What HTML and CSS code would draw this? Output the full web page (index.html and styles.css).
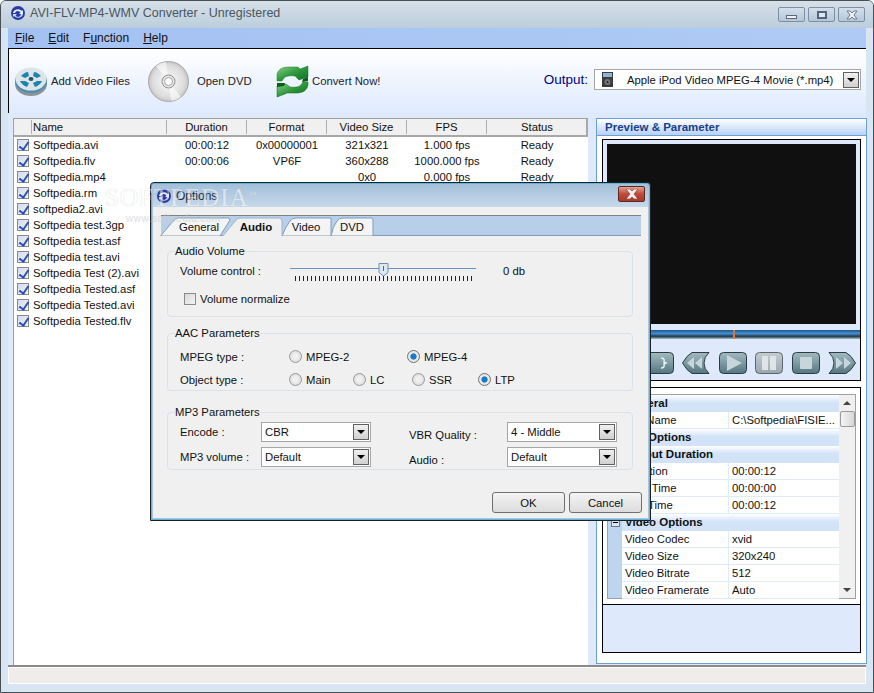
FILE: index.html
```html
<!DOCTYPE html>
<html lang="en">
<head>
  <meta charset="UTF-8">
  <title>AVI-FLV-MP4-WMV Converter - Unregistered</title>
  <link rel="stylesheet" href="styles.css">
</head>
<body>
  <div class="window">
    <svg width="0" height="0" class="defs">
      <defs>
        <linearGradient id="btn" x1="0" y1="0" x2="0" y2="1">
          <stop offset="0" stop-color="#a3b9bf"/>
          <stop offset="0.5" stop-color="#7d9aa2"/>
          <stop offset="1" stop-color="#557680"/>
        </linearGradient>
        <linearGradient id="btn-off" x1="0" y1="0" x2="0" y2="1">
          <stop offset="0" stop-color="#c4ccd2"/>
          <stop offset="1" stop-color="#9aa6ae"/>
        </linearGradient>
        <linearGradient id="green" x1="0" y1="0" x2="1" y2="1">
          <stop offset="0" stop-color="#8fd08c"/>
          <stop offset="0.5" stop-color="#2f9a3c"/>
          <stop offset="1" stop-color="#0c6a22"/>
        </linearGradient>
        <radialGradient id="cd" cx="0.5" cy="0.5" r="0.5">
          <stop offset="0.2" stop-color="#f4f4f4"/>
          <stop offset="0.8" stop-color="#dcdcdc"/>
          <stop offset="1" stop-color="#c4c4c4"/>
        </radialGradient>
      </defs>
    </svg>

    <div class="titlebar">
      <svg class="app-icon" width="16" height="16" viewBox="0 0 16 16">
        <circle cx="8" cy="8" r="7" fill="#2a3aa8"/>
        <path d="M3 8a5 4 0 0 1 9-2l1-1v4H9l1.500-1.500A3 3 0 0 0 5 8z" fill="#e8eef8"/>
        <path d="M13 9a5 4 0 0 1-9 2l-1 1V9h4l-1.500 1.500A3 3 0 0 0 11 9z" fill="#cfd8f0"/>
      </svg>
      <span class="title-text">AVI-FLV-MP4-WMV Converter - Unregistered</span>
      <div class="title-buttons">
        <span class="cap-btn"><i class="cap-min"></i></span>
        <span class="cap-btn"><i class="cap-max"></i></span>
        <span class="cap-btn cap-x">
          <svg width="12" height="10" viewBox="0 0 12 10"><path d="M1 1h3l2 2 2-2h3L8 5l3 4H8L6 7 4 9H1l3-4z" fill="#eef2f6" stroke="#6c7c8c" stroke-width="1"/></svg>
        </span>
      </div>
    </div>

    <div class="client">
      <div class="menubar">
        <span class="menu"><u>F</u>ile</span>
        <span class="menu"><u>E</u>dit</span>
        <span class="menu">F<u>u</u>nction</span>
        <span class="menu"><u>H</u>elp</span>
      </div>

      <div class="toolbar">
        <div class="tool tool-add">
          <svg width="34" height="32" viewBox="0 0 34 32">
            <ellipse cx="17" cy="19" rx="16" ry="12" fill="#8d9298"/>
            <ellipse cx="17" cy="16" rx="16" ry="12" fill="#4d8fb0"/>
            <ellipse cx="17" cy="14" rx="15.500" ry="11.500" fill="#dfe4e8"/>
            <path d="M7 11q4-4 7-4l1 4-4 2zM27 11q-4-4-7-4l-1 4 4 2zM6 16q2 4 7 6l2-4-4-2zM28 16q-2 4-7 6l-2-4 4-2z" fill="#1a86ad"/>
            <ellipse cx="17" cy="14" rx="2.500" ry="2" fill="#27536a"/>
          </svg>
          <span>Add Video Files</span>
        </div>
        <div class="tool tool-dvd">
          <svg width="41" height="41" viewBox="0 0 41 41">
            <circle cx="20.500" cy="20.500" r="20" fill="url(#cd)" stroke="#a8a8a8"/>
            <path d="M20.500 20.500L8 5a20 20 0 0 1 10-4zM20.500 20.500L33 36a20 20 0 0 1-10 4z" fill="#fff" opacity="0.6"/>
            <circle cx="20.500" cy="20.500" r="6.500" fill="#e8e8e8" stroke="#8f8f8f"/>
            <circle cx="20.500" cy="20.500" r="4" fill="#fff" stroke="#a0a0a0"/>
          </svg>
          <span>Open DVD</span>
        </div>
        <div class="tool tool-convert">
          <svg width="33" height="33" viewBox="0 0 33 33">
            <path d="M1 9Q3 2 12 2h10l2 2 8-3v11l-9 3-4-4q-8-1-11 2l-2 3H1z" fill="url(#green)" stroke="#1a7a2c" stroke-width="0.500"/>
            <path d="M32 20q-1 7-10 8H11l-2 1-8 3V21l9-2 4 3q8 1 11-2l2-3h5z" fill="url(#green)" stroke="#0c6a22" stroke-width="0.500"/>
            <path d="M1 18h8l-1 3-7 1zM32 12v4l-6 1 1-3z" fill="#0b5a1d"/>
          </svg>
          <span>Convert Now!</span>
        </div>
        <div class="output">
          <span class="output-label">Output:</span>
          <div class="combo combo-output">
            <svg class="ipod" width="11" height="15" viewBox="0 0 11 15">
              <rect width="11" height="15" fill="#3a3c40"/>
              <rect x="1" y="1" width="9" height="4" fill="#8fb4d8"/>
              <circle cx="5.500" cy="10" r="3" fill="#777"/>
              <circle cx="5.500" cy="10" r="1" fill="#222"/>
            </svg>
            <span class="combo-text">Apple iPod Video MPEG-4 Movie (*.mp4)</span>
            <span class="combo-arrow"></span>
          </div>
        </div>
      </div>

      <div class="workspace">
        <div class="list">
          <div class="list-row list-head">
            <span></span>
            <span class="cell-name">Name</span>
            <span>Duration</span>
            <span>Format</span>
            <span>Video Size</span>
            <span>FPS</span>
            <span>Status</span>
          </div>
          <div class="list-row"><i class="check"></i><span class="cell-name">Softpedia.avi</span><span>00:00:12</span><span>0x00000001</span><span>321x321</span><span>1.000 fps</span><span>Ready</span></div>
          <div class="list-row"><i class="check"></i><span class="cell-name">Softpedia.flv</span><span>00:00:06</span><span>VP6F</span><span>360x288</span><span>1000.000 fps</span><span>Ready</span></div>
          <div class="list-row"><i class="check"></i><span class="cell-name">Softpedia.mp4</span><span></span><span></span><span>0x0</span><span>0.000 fps</span><span>Ready</span></div>
          <div class="list-row"><i class="check"></i><span class="cell-name">Softpedia.rm</span><span></span><span></span><span></span><span></span><span></span></div>
          <div class="list-row"><i class="check"></i><span class="cell-name">softpedia2.avi</span><span></span><span></span><span></span><span></span><span></span></div>
          <div class="list-row"><i class="check"></i><span class="cell-name">Softpedia test.3gp</span><span></span><span></span><span></span><span></span><span></span></div>
          <div class="list-row"><i class="check"></i><span class="cell-name">Softpedia test.asf</span><span></span><span></span><span></span><span></span><span></span></div>
          <div class="list-row"><i class="check"></i><span class="cell-name">Softpedia test.avi</span><span></span><span></span><span></span><span></span><span></span></div>
          <div class="list-row"><i class="check"></i><span class="cell-name">Softpedia Test (2).avi</span><span></span><span></span><span></span><span></span><span></span></div>
          <div class="list-row"><i class="check"></i><span class="cell-name">Softpedia Tested.asf</span><span></span><span></span><span></span><span></span><span></span></div>
          <div class="list-row"><i class="check"></i><span class="cell-name">Softpedia Tested.avi</span><span></span><span></span><span></span><span></span><span></span></div>
          <div class="list-row"><i class="check"></i><span class="cell-name">Softpedia Tested.flv</span><span></span><span></span><span></span><span></span><span></span></div>
        </div>

        <div class="panel">
          <div class="panel-head">Preview &amp; Parameter</div>
          <div class="panel-body">
            <div class="preview">
              <div class="screen"></div>
              <div class="seekbar"><i class="seek-mark"></i></div>
              <div class="controls">
                <svg width="28" height="22" viewBox="0 0 28 22"><rect x="0.500" y="0.500" width="27" height="21" rx="4" fill="url(#btn)" stroke="#2c3c42"/><path d="M15 6q4 0 3 4l2 1-2 1q1 4-3 4" fill="none" stroke="#e8f2f4" stroke-width="1.500"/></svg>
                <svg width="28" height="22" viewBox="0 0 28 22"><path d="M10 .5H27Q22 5 22 11t5 10.500H10Q5 19 .5 11 5 3 10 .5z" fill="url(#btn)" stroke="#2c3c42"/><path d="M12 5v12l-7-6zM20 5v12l-7-6z" fill="#c6d6da"/></svg>
                <svg width="28" height="22" viewBox="0 0 28 22"><rect x="0.500" y="0.500" width="27" height="21" rx="4" fill="url(#btn)" stroke="#2c3c42"/><path d="M8 3v16l15-8z" fill="#c6d6da"/></svg>
                <svg width="28" height="22" viewBox="0 0 28 22"><rect x="0.500" y="0.500" width="27" height="21" rx="4" fill="url(#btn-off)" stroke="#5c666c"/><rect x="7" y="4" width="6" height="14" fill="#dfe4e8"/><rect x="15" y="4" width="6" height="14" fill="#dfe4e8"/></svg>
                <svg width="28" height="22" viewBox="0 0 28 22"><rect x="0.500" y="0.500" width="27" height="21" rx="4" fill="url(#btn)" stroke="#2c3c42"/><rect x="8" y="5" width="12" height="12" rx="1" fill="#c6d6da"/></svg>
                <svg width="28" height="22" viewBox="0 0 28 22"><path d="M18 .5H1Q6 5 6 11t-5 10.500H18Q23 19 27.500 11 23 3 18 .5z" fill="url(#btn)" stroke="#2c3c42"/><path d="M8 5v12l7-6zM16 5v12l7-6z" fill="#c6d6da"/></svg>
              </div>
            </div>

            <div class="props-box">
              <div class="props-wrap">
                <div class="props">
                  <div class="prop-section">General</div>
                  <div class="prop"><span>File Name</span><span>C:\Softpedia\FISIE...</span></div>
                  <div class="prop-section">File Options</div>
                  <div class="prop-section">Output Duration</div>
                  <div class="prop"><span>Duration</span><span>00:00:12</span></div>
                  <div class="prop"><span>Start Time</span><span>00:00:00</span></div>
                  <div class="prop"><span>End Time</span><span>00:00:12</span></div>
                  <div class="prop-section"><i class="minus"></i>Video Options</div>
                  <div class="prop"><span>Video Codec</span><span>xvid</span></div>
                  <div class="prop"><span>Video Size</span><span>320x240</span></div>
                  <div class="prop"><span>Video Bitrate</span><span>512</span></div>
                  <div class="prop"><span>Video Framerate</span><span>Auto</span></div>
                </div>
                <div class="scrollbar">
                  <i class="arrow-up"></i>
                  <i class="thumb"></i>
                  <i class="arrow-down"></i>
                </div>
              </div>
              <div class="props-help"></div>
            </div>
          </div>
        </div>
      </div>

      <div class="statusbar"></div>
    </div>

    <div class="dialog">
      <div class="dialog-title">
        <svg class="app-icon" width="16" height="16" viewBox="0 0 16 16">
          <circle cx="8" cy="8" r="7" fill="#2a3aa8"/>
          <path d="M3 8a5 4 0 0 1 9-2l1-1v4H9l1.500-1.500A3 3 0 0 0 5 8z" fill="#e8eef8"/>
          <path d="M13 9a5 4 0 0 1-9 2l-1 1V9h4l-1.500 1.500A3 3 0 0 0 11 9z" fill="#cfd8f0"/>
        </svg>
        <span>Options</span>
        <span class="dialog-close">
          <svg width="14" height="10" viewBox="0 0 14 10"><path d="M1 0h4l2 2 2-2h4L9 5l4 5H9L7 8l-2 2H1l4-5z" fill="#f4f0ee" stroke="#7a2a20" stroke-width="0.600"/></svg>
        </span>
      </div>
      <div class="dialog-body">
        <div class="tabstrip">
          <svg class="tabs" width="240" height="20" viewBox="0 0 240 20">
            <path d="M.5 20L14 4q2-2 4-2H68q2 0 2 2L60 20z" fill="#f4f4f4" stroke="#7f9db9"/>
            <path d="M122 20q4-10 8-15 2-3 6-3h35v18z" fill="#f4f4f4" stroke="#7f9db9"/>
            <path d="M171 20q2-10 6-15 2-3 6-3h28q2 0 2 2v16z" fill="#f4f4f4" stroke="#7f9db9"/>
            <path d="M62 21L76 4q2-2 4-2h39q3 0 3 3v16z" fill="#f0f0f0" stroke="#9ab4cc"/>
            <path d="M62 21H122" stroke="#f0f0f0" stroke-width="2"/>
            <text x="39" y="15" text-anchor="middle" class="tab-text">General</text>
            <text x="96" y="15" text-anchor="middle" class="tab-text tab-active">Audio</text>
            <text x="146" y="15" text-anchor="middle" class="tab-text">Video</text>
            <text x="192" y="15" text-anchor="middle" class="tab-text">DVD</text>
          </svg>
        </div>

        <fieldset class="group group-volume">
          <legend>Audio Volume</legend>
          <div class="volume-row">
            <span class="volume-label">Volume control :</span>
            <div class="slider">
              <i class="slider-line"></i>
              <svg class="slider-thumb" width="11" height="15" viewBox="0 0 11 15"><path d="M1 1.500h9v9L5.500 14 1 10.500z" fill="#dce8f4" stroke="#6f8fb0"/><path d="M5.500 4v5" stroke="#3a6ea8"/></svg>
              <i class="slider-ticks"></i>
            </div>
            <span class="volume-value">0 db</span>
          </div>
          <label class="normalize"><i class="check-off"></i>Volume normalize</label>
        </fieldset>

        <fieldset class="group group-aac">
          <legend>AAC Parameters</legend>
          <div class="aac-row">
            <span class="aac-label">MPEG type :</span>
            <span class="radio-item item-mpeg2"><i class="radio"></i>MPEG-2</span>
            <span class="radio-item"><i class="radio on"></i>MPEG-4</span>
          </div>
          <div class="aac-row">
            <span class="aac-label">Object type :</span>
            <span class="radio-item item-main"><i class="radio"></i>Main</span>
            <span class="radio-item item-lc"><i class="radio"></i>LC</span>
            <span class="radio-item item-ssr"><i class="radio"></i>SSR</span>
            <span class="radio-item"><i class="radio on"></i>LTP</span>
          </div>
        </fieldset>

        <fieldset class="group group-mp3">
          <legend>MP3 Parameters</legend>
          <div class="mp3-grid">
            <span class="mp3-label">Encode :</span>
            <div class="combo combo-small"><span class="combo-text">CBR</span><span class="combo-arrow"></span></div>
            <span class="mp3-label mp3-label-low">VBR Quality :</span>
            <div class="combo combo-small"><span class="combo-text">4 - Middle</span><span class="combo-arrow"></span></div>
            <span class="mp3-label">MP3 volume :</span>
            <div class="combo combo-small"><span class="combo-text">Default</span><span class="combo-arrow"></span></div>
            <span class="mp3-label mp3-label-low">Audio :</span>
            <div class="combo combo-small"><span class="combo-text">Default</span><span class="combo-arrow"></span></div>
          </div>
        </fieldset>

        <div class="dialog-actions">
          <button class="btn">OK</button>
          <button class="btn">Cancel</button>
        </div>
      </div>
    </div>

    <div class="watermark">SOFTPEDIA<sup>™</sup></div>
    <div class="watermark-url">www.softpedia.com</div>
  </div>
</body>
</html>
```

FILE: styles.css
```css
* {
  box-sizing: border-box;
}

body {
  margin: 0;
  font-family: "Liberation Sans", Arial, sans-serif;
  font-size: 11.3px;
  color: #111;
  background: #fff;
}

.defs {
  position: absolute;
}

.window {
  position: relative;
  width: 874px;
  height: 693px;
  overflow: hidden;
  display: flex;
  flex-direction: column;
  background: #d8e6f4;
  border: 1px solid #4a4f55;
  border-radius: 6px 6px 0 0;
}

/* title bar */
.titlebar {
  height: 27px;
  flex: none;
  display: flex;
  align-items: center;
  padding: 0 8px 3px 9px;
  background: linear-gradient(to bottom, #d6e0e8, #bccddc);
}

.title-text {
  margin-left: 4px;
  font-size: 12.5px;
  color: #4b5660;
}

.title-buttons {
  margin-left: auto;
  display: flex;
  gap: 3px;
  margin-top: 3px;
}

.cap-btn {
  width: 27px;
  height: 15px;
  display: flex;
  align-items: center;
  justify-content: center;
  background: linear-gradient(to bottom, #d4e0ea, #b4c6d8);
  border: 1px solid #7f8fa2;
  border-radius: 2px;
}

.cap-min {
  width: 11px;
  height: 4px;
  margin-top: 4px;
  background: #eef2f6;
  border: 1px solid #5c6a7a;
}

.cap-max {
  width: 10px;
  height: 8px;
  background: #dfe8f0;
  border: 2px solid #56647a;
  border-top-width: 2px;
}

/* main client area */
.client {
  flex: 1;
  margin: 0 7px 8px 7px;
  display: flex;
  flex-direction: column;
  min-height: 0;
}

.menubar {
  height: 20px;
  flex: none;
  display: flex;
  align-items: center;
  background: linear-gradient(to right, #a3c1f2, #afcbf5);
  font-size: 12px;
  padding-left: 7px;
}

.menu {
  margin-right: 14px;
}

.toolbar {
  height: 65px;
  flex: none;
  display: flex;
  align-items: center;
  background: linear-gradient(to bottom, #fff, #deeafd);
  border-top: 1px solid #000;
  border-left: 1px solid #000;
  padding-left: 5px;
}

.tool {
  display: flex;
  align-items: center;
  color: #1a2230;
}

.tool-add {
  gap: 3px;
  width: 134px;
}

.tool-dvd {
  gap: 8px;
  width: 128px;
}

.tool-convert {
  gap: 3px;
}

.output {
  margin-left: auto;
  display: flex;
  align-items: center;
  margin-right: 5px;
  margin-top: -3px;
}

.output-label {
  color: #000080;
  font-size: 13.5px;
  margin-right: 6px;
}

.combo {
  display: flex;
  align-items: center;
  background: #fff;
  border: 1px solid #a6a6a6;
  position: relative;
}

.combo-output {
  width: 267px;
  height: 21px;
  padding-left: 7px;
}

.ipod {
  margin-right: 14px;
}

.combo-arrow {
  width: 16px;
  height: 16px;
  margin-left: auto;
  margin-right: 1px;
  background: linear-gradient(to bottom, #f0f0f0, #d0d0d0);
  border: 1px solid #606060;
  position: relative;
}

.combo-arrow::after {
  content: "";
  position: absolute;
  left: 3px;
  top: 5px;
  border: 4px solid transparent;
  border-top: 4px solid #000;
}

/* list and panel */
.workspace {
  flex: 1;
  display: flex;
  min-height: 0;
  background: #deeafc;
  padding: 5px 0 0 5px;
}

.list {
  width: 575px;
  background: #fff;
  border-left: 1px solid #a0a0a0;
  border-top: 1px solid #a0a0a0;
  flex: none;
}

.list-row {
  display: grid;
  grid-template-columns: 18px 135px 80px 80px 80px 80px 100px;
  height: 16px;
  align-items: center;
  text-align: center;
  white-space: nowrap;
}

.list-row .cell-name {
  text-align: left;
  padding-left: 1px;
}

.list-head {
  height: 18px;
  background: #f0f0f0;
  border-bottom: 2px solid #a8a8a8;
  border-right: 2px solid #a8a8a8;
  margin-bottom: 0;
}

.list-head span {
  line-height: 16px;
  height: 14px;
  border-right: 1px solid #b0b0b0;
  line-height: 14px;
}

.list-head span:last-child {
  border-right: none;
}

.check {
  width: 12px;
  height: 12px;
  margin-left: 3px;
  border: 1px solid #8a8a8a;
  background: linear-gradient(135deg, #d4dce8, #f0f3f8);
  position: relative;
}

.check::after {
  content: "";
  position: absolute;
  left: 3px;
  top: 0;
  width: 4px;
  height: 8px;
  border: solid #2a4fc0;
  border-width: 0 2px 2px 0;
  transform: rotate(35deg);
}

.panel {
  width: 271px;
  margin-left: 8px;
  margin-bottom: 1px;
  border: 1px solid #6c9fd8;
  background: #fff;
  flex: none;
  display: flex;
  flex-direction: column;
}

.panel-head {
  height: 17px;
  flex: none;
  background: linear-gradient(to bottom, #fff, #b6d2f6);
  border-bottom: 1px solid #6c9fd8;
  color: #18408c;
  font-weight: bold;
  font-size: 11.5px;
  padding-left: 8px;
  line-height: 16px;
}

.panel-body {
  flex: 1;
  padding: 3px 5px 10px 5px;
  display: flex;
  flex-direction: column;
  gap: 6px;
}

.preview {
  height: 242px;
  flex: none;
  border: 1px solid #000;
  background: #deeafc;
  padding: 4px;
}

.screen {
  height: 180px;
  background: #101010;
}

.seekbar {
  height: 9px;
  margin: 6px -4px 0;
  background: linear-gradient(to bottom, #1a5a8c, #4a8ed0 40%, #1a3a4c 70%, #a8bcb8);
  position: relative;
}

.seek-mark {
  position: absolute;
  left: 130px;
  top: 0;
  width: 2px;
  height: 9px;
  background: #e8703a;
}

.controls {
  display: flex;
  justify-content: flex-end;
  gap: 8.500px;
  margin-top: 13px;
}

.props-box {
  flex: 1;
  border: 1px solid #000;
  background: #deeafc;
  display: flex;
  flex-direction: column;
}

.props-wrap {
  height: 217px;
  flex: none;
  background: #fff;
  border-bottom: 1px solid #000;
  padding: 6px 4px 5px 4px;
  display: flex;
}

.props {
  flex: 1;
  border: 1px solid #a0a0a0;
  border-right: none;
  border-top-color: #a0a0a0;
  background: #bdd5ee;
}

.prop-section {
  height: 17px;
  margin-left: 14px;
  background: linear-gradient(to bottom, #fff, #d2e3f8 45%);
  font-weight: bold;
  font-size: 11.5px;
  line-height: 16px;
  padding-left: 3px;
  position: relative;
}

.minus {
  position: absolute;
  left: -11px;
  top: 4px;
  width: 9px;
  height: 9px;
  background: #dce6f0;
  border: 1px solid #6a7a8a;
}

.minus::after {
  content: "";
  position: absolute;
  left: 1px;
  top: 3px;
  width: 5px;
  height: 1px;
  background: #000;
}

.prop {
  height: 17px;
  margin-left: 14px;
  display: grid;
  grid-template-columns: 107px 1fr;
  background: #fff;
  border-bottom: 1px solid #dfeafa;
  line-height: 16px;
}

.prop span {
  padding-left: 3px;
  white-space: nowrap;
  overflow: hidden;
}

.prop span:first-child {
  border-right: 1px solid #dfeafa;
}

.scrollbar {
  width: 17px;
  flex: none;
  background: #f0f0f0;
  border: 1px solid #a0a0a0;
  border-left: none;
  display: flex;
  flex-direction: column;
  align-items: center;
  padding-top: 6px;
}

.arrow-up {
  border: 4px solid transparent;
  border-top: none;
  border-bottom: 4px solid #444;
}

.arrow-down {
  border: 4px solid transparent;
  border-bottom: none;
  border-top: 4px solid #444;
  margin-top: auto;
  margin-bottom: 6px;
}

.thumb {
  width: 15px;
  height: 16px;
  margin-top: 6px;
  background: linear-gradient(to right, #f4f4f4, #d8d8d8);
  border: 1px solid #9a9a9a;
  border-radius: 2px;
}

.props-help {
  flex: 1;
}

.statusbar {
  height: 19px;
  flex: none;
  background: #efecea;
  border-top: 2px solid #8a8a8a;
  border-bottom: 1px solid #fff;
  box-shadow: inset 0 1px 0 #fff, inset 1px 0 0 #fff, inset -1px 0 0 #fff;
}

/* options dialog */
.dialog {
  position: absolute;
  left: 149px;
  top: 181px;
  width: 501px;
  height: 339px;
  background: #a8c6de;
  border: 1px solid #1a2228;
  border-radius: 4px 4px 0 0;
  padding: 0 2px 2px;
  box-shadow: inset 0 0 0 1px #5fb4dc;
  display: flex;
  flex-direction: column;
}

.dialog-title {
  height: 23px;
  flex: none;
  display: flex;
  align-items: center;
  gap: 4px;
  padding-left: 3px;
  font-size: 12px;
  color: #24303a;
  background: linear-gradient(to bottom, #a4c0da, #c6d8ea);
  margin: 1px 0 0;
}

.dialog-close {
  margin-left: auto;
  margin-right: 3px;
  width: 27px;
  height: 16px;
  margin-top: -3px;
  display: flex;
  align-items: center;
  justify-content: center;
  border: 1px solid #5a2a26;
  border-radius: 2px;
  background: linear-gradient(to bottom, #e4a090, #c04a38 50%, #a83a2a);
}

.dialog-body {
  flex: 1;
  background: #f0f0f0;
  padding: 8px 8px 0;
}

.tabstrip {
  height: 21px;
  margin-right: 0;
  width: 480px;
  background: #b8cfe9;
  border-top: 1px solid #808080;
  border-bottom: 1px solid #7f9db9;
  overflow: visible;
}

.tabs {
  display: block;
  margin-left: -1px;
}

.tab-text {
  font-family: "Liberation Sans", Arial, sans-serif;
  font-size: 11.3px;
  fill: #111;
}

.tab-active {
  font-weight: bold;
  font-size: 11.5px;
}

.group {
  margin: 0 7px 0 6px;
  padding: 0 0 0 12px;
  border: 1px solid #d8e2ec;
  border-radius: 4px;
  min-width: 0;
}

.group legend {
  padding: 0;
  margin-left: -5px;
  line-height: 12px;
}

.group-volume {
  height: 72px;
  margin-top: 9px;
}

.group-aac {
  height: 64px;
  margin-top: 10px;
}

.group-mp3 {
  height: 64px;
  margin-top: 15px;
}

.volume-row {
  display: flex;
  align-items: center;
  height: 18px;
  margin-top: 5px;
}

.volume-label {
  width: 110px;
}

.slider {
  width: 186px;
  height: 18px;
  position: relative;
}

.slider-line {
  position: absolute;
  left: 0;
  right: 0;
  top: 6px;
  height: 1px;
  background: #6b93c0;
}

.slider-thumb {
  position: absolute;
  left: 88px;
  top: 0;
}

.slider-ticks {
  position: absolute;
  left: 5px;
  right: 4px;
  top: 14px;
  height: 5px;
  background: repeating-linear-gradient(to right, #222 0, #222 1px, transparent 1px, transparent 4px);
}

.volume-value {
  margin-left: 27px;
}

.normalize {
  display: flex;
  align-items: center;
  margin: 13px 0 0 4px;
  gap: 4px;
}

.check-off {
  width: 12px;
  height: 12px;
  background: linear-gradient(135deg, #d8d8d8, #f4f4f4);
  border: 1px solid #8a8a8a;
}

.aac-row {
  display: flex;
  align-items: center;
  height: 23px;
}

.aac-row:first-of-type {
  margin-top: 6px;
}

.aac-label {
  width: 109px;
}

.radio-item {
  display: flex;
  align-items: center;
  gap: 4px;
}

.item-mpeg2 {
  width: 118px;
}

.item-main {
  width: 64px;
}

.item-lc {
  width: 59px;
}

.item-ssr {
  width: 66px;
}

.radio {
  width: 13px;
  height: 13px;
  border-radius: 50%;
  background: radial-gradient(circle, #f0f0f0 30%, #d0d0d0);
  border: 1px solid #9a9a9a;
}

.radio.on {
  background: radial-gradient(circle, #1a7ac8 35%, #e8e8e8 45%);
  border-color: #707070;
}

.mp3-grid {
  display: grid;
  grid-template-columns: 81px 110px 58px 78px 110px;
  grid-template-columns: 81px 110px 58px 78px 110px;
  row-gap: 5px;
  margin-top: 4px;
}

.mp3-grid > :nth-child(3),
.mp3-grid > :nth-child(7) {
  grid-column: 4;
  margin-left: -20px;
}

.mp3-label {
  align-self: center;
}

.mp3-label-low {
  padding-top: 5px;
}

.combo-small {
  height: 20px;
  padding-left: 3px;
}

.dialog-actions {
  display: flex;
  justify-content: flex-end;
  gap: 4px;
  margin: 22px -2px 0 0;
}

.btn {
  width: 73px;
  height: 21px;
  font: inherit;
  color: #111;
  background: linear-gradient(to bottom, #f4f4f4, #dcdcdc);
  border: 1px solid #707070;
  border-radius: 3px;
  padding: 0;
}

/* softpedia stamp on top of the shot */
.watermark {
  position: absolute;
  left: 104px;
  top: 183px;
  font-family: "Liberation Serif", serif;
  font-size: 25px;
  letter-spacing: 1px;
  color: #fff;
  opacity: 0.5;
  text-shadow: 0 0 1px #999;
  white-space: nowrap;
  pointer-events: none;
}

.watermark sup {
  font-size: 8px;
}

.watermark-url {
  position: absolute;
  left: 125px;
  top: 212px;
  font-size: 10px;
  letter-spacing: 0.500px;
  color: #d0d0d0;
  opacity: 0.7;
  pointer-events: none;
}
```
